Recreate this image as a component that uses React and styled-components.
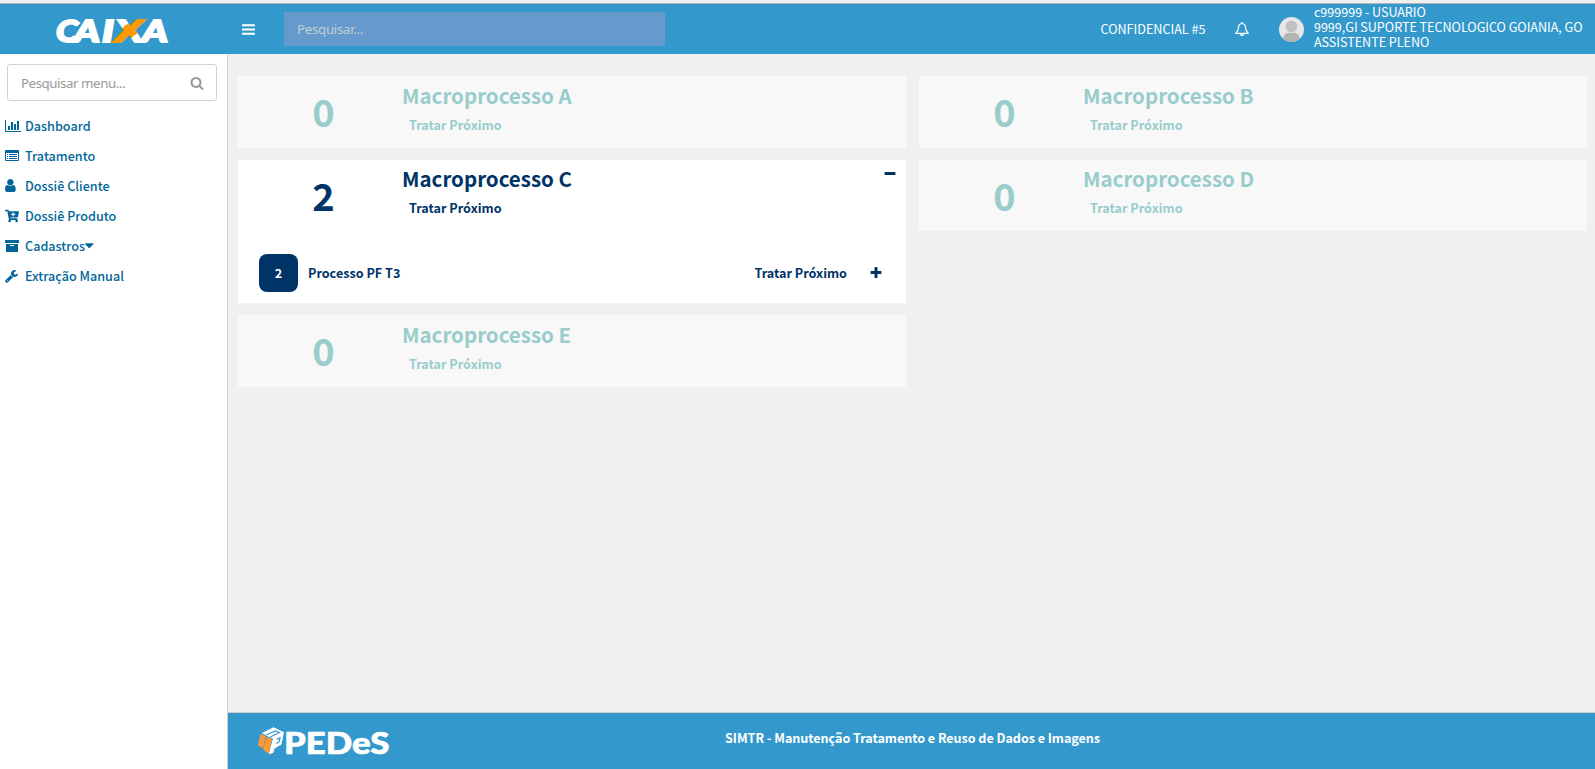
import React from "react";
import styled, { createGlobalStyle } from "styled-components";
import { FaCartPlus } from "react-icons/fa";

const sans = `"Noto Sans CJK SC", "Noto Sans", sans-serif`;

const GlobalStyle = createGlobalStyle`
  * { box-sizing: border-box; }
  body { margin: 0; background: #f0f0f0; font-family: ${sans}; font-size: 12.6px; }
  #root { height: 100vh; }
`;

const Page = styled.div`
  height: 100vh;
  padding-top: 3px;
  display: flex;
  flex-direction: column;
  overflow: hidden;
`;

const Header = styled.header`
  height: 51px;
  flex: none;
  display: flex;
  align-items: center;
  background: #3399cc;
  border-top: 1px solid #b3b3b3;
  color: #fff;
`;

const Brand = styled.div`
  width: 241px;
  padding: 3px 0 0 55px;
  flex: none;
`;

const BrandWord = styled.svg`
  display: block;
  width: 116px;
  height: 28px;
  overflow: visible;
  font: italic 900 31px Lato, sans-serif;
  fill: #fff;
  stroke: #fff;
  stroke-width: 1.8px;
  stroke-linejoin: miter;
`;

const IconButton = styled.button`
  display: flex;
  padding: 0;
  border: 0;
  background: none;
  color: inherit;
`;

const HeaderSearch = styled.input`
  width: 381px;
  height: 34px;
  margin-left: 28px;
  padding: 0 13px;
  border: 0;
  background: #6699cc;
  font: 13.3px "Noto Sans", sans-serif;
  letter-spacing: -0.3px;
  &::placeholder { color: #c0d0d0; opacity: 1; }
`;

const Account = styled.div`
  margin-left: auto;
  padding-right: 12.5px;
  display: flex;
  align-items: center;
`;

const Confidential = styled.span`
  margin: -1px 30px 0 0;
`;

const Avatar = styled.svg`
  width: 25px;
  height: 25px;
  margin: 0 9.5px 0 30px;
`;

const UserInfo = styled.div`
  height: 51px;
  line-height: 15px;
  letter-spacing: -0.03px;
  white-space: nowrap;
`;

const Body = styled.div`
  flex: 1;
  min-height: 0;
  display: flex;
`;

const Sidebar = styled.aside`
  width: 228px;
  flex: none;
  padding: 10px 10px 0 7px;
  background: #fff;
  border-right: 1px solid #d2d2d2;
`;

const MenuSearch = styled.div`
  height: 37px;
  display: flex;
  align-items: center;
  padding: 0 12px 0 13px;
  border: 1px solid #d2d2d2;
  border-radius: 3px;
  color: #999;
`;

const MenuInput = styled.input`
  flex: 1;
  min-width: 0;
  padding: 0;
  border: 0;
  outline: 0;
  font: 13.3px "Noto Sans", sans-serif;
  letter-spacing: -0.44px;
  &::placeholder { color: #999; opacity: 1; }
`;

const Menu = styled.nav`
  margin: 9px 0 0 -2px;
`;

const MenuItem = styled.a`
  height: 30px;
  display: flex;
  align-items: center;
  color: #006699;
  font-weight: 500;
`;

const MenuIcon = styled.span`
  width: 20px;
  padding-top: 1px;
  display: flex;
  font-size: 14px;
`;

const Content = styled.div`
  flex: 1;
  min-width: 0;
  display: flex;
  flex-direction: column;
`;

const Board = styled.main`
  flex: 1;
  padding: 22px 8px 0 10px;
  display: grid;
  grid-template-columns: 1fr 1fr;
  gap: 13px;
`;

const Column = styled.div`
  display: flex;
  flex-direction: column;
  gap: 12px;
`;

const Card = styled.section`
  background: ${(p) => (p.$active ? "#fff" : "#f8f8f8")};
  color: ${(p) => (p.$active ? "#003366" : "#99cccc")};
  font-weight: 700;
`;

const CardHead = styled.div`
  height: 71.6px;
  display: flex;
`;

const Count = styled.div`
  width: 164px;
  padding-left: 7px;
  display: flex;
  justify-content: center;
  font-size: 38px;
  line-height: 69.2px;
`;

const CardTitles = styled.div`
  flex: 1;
`;

const Title = styled.h2`
  margin: 3.7px 0 0;
  font-size: 20.5px;
  line-height: 30px;
`;

const Next = styled.div`
  margin-top: 2.1px;
  padding-left: 7px;
  line-height: 26px;
`;

const Toggle = styled.div`
  padding: 6px 9px 0 0;
`;

const Process = styled.div`
  height: 71.8px;
  padding: 22px 23px 11px 21px;
  display: flex;
  align-items: center;
`;

const Badge = styled.div`
  width: 39px;
  height: 38px;
  margin-right: 10px;
  border-radius: 8px;
  background: #003366;
  color: #fff;
  text-align: center;
  line-height: 38px;
`;

const ProcessName = styled.span`
  margin-top: -1px;
`;

const ProcessNext = styled.span`
  margin: -1px 22px 0 auto;
`;

const Footer = styled.footer`
  height: 57px;
  flex: none;
  border-top: 1px solid #ccc;
  background: #3399cc;
  color: #fff;
  display: flex;
`;

const FooterBrand = styled.div`
  width: 497px;
  padding: 14px 0 0 30px;
  display: flex;
`;

const Cube = styled.svg`
  width: 26px;
  height: 28px;
`;

const PedesWord = styled.span`
  font: 900 31px/31px Lato, sans-serif;
  transform-origin: left center;
  transform: scaleX(1.12);
  -webkit-text-stroke: 0.7px currentColor;
`;

const FooterText = styled.div`
  font-weight: 700;
  line-height: 50px;
  letter-spacing: -0.05px;
  white-space: nowrap;
`;

const glyphs = {
  bars: "M1664 1344v128q0 26-19 45t-45 19h-1408q-26 0-45-19t-19-45v-128q0-26 19-45t45-19h1408q26 0 45 19t19 45zm0-512v128q0 26-19 45t-45 19h-1408q-26 0-45-19t-19-45v-128q0-26 19-45t45-19h1408q26 0 45 19t19 45zm0-512v128q0 26-19 45t-45 19h-1408q-26 0-45-19t-19-45v-128q0-26 19-45t45-19h1408q26 0 45 19t19 45z",
  search: "M1216 832q0-185-131.5-316.5t-316.5-131.5-316.5 131.5-131.5 316.5 131.5 316.5 316.5 131.5 316.5-131.5 131.5-316.5zm512 832q0 52-38 90t-90 38q-54 0-90-38l-343-342q-179 124-399 124-143 0-273.5-55.5t-225-150-150-225-55.5-273.5 55.5-273.5 150-225 225-150 273.5-55.5 273.5 55.5 225 150 150 225 55.5 273.5q0 220-124 399l343 343q37 37 37 90z",
  plus: "M1600 736v192q0 40-28 68t-68 28h-416v416q0 40-28 68t-68 28h-192q-40 0-68-28t-28-68v-416h-416q-40 0-68-28t-28-68v-192q0-40 28-68t68-28h416v-416q0-40 28-68t68-28h192q40 0 68 28t28 68v416h416q40 0 68 28t28 68z",
  minus: "M1600 736v192q0 40-28 68t-68 28h-1216q-40 0-68-28t-28-68v-192q0-40 28-68t68-28h1216q40 0 68 28t28 68z",
  caret: "M1408 704q0 26-19 45l-448 448q-19 19-45 19t-45-19l-448-448q-19-19-19-45t19-45 45-19h896q26 0 45 19t19 45z",
  wrench: "M448 1472q0-26-19-45t-45-19-45 19-19 45 19 45 45 19 45-19 19-45zm644-420l-682 682q-37 37-90 37-52 0-91-37l-106-108q-38-36-38-90 0-53 38-91l681-681q39 98 114.5 173.5t173.5 114.5zm634-435q0 39-23 106-47 134-164.5 217.5t-258.5 83.5q-185 0-316.5-131.5t-131.5-316.5 131.5-316.5 316.5-131.5q58 0 121.5 16.5t107.5 46.5q16 11 16 28t-16 28l-293 169v224l193 107q5-3 79-48.5t135.5-81 70.5-35.5q15 0 23.500 10t8.500 25z",
  user: "M1536 1399q0 109-62.5 187t-150.5 78h-854q-88 0-150.5-78t-62.5-187q0-85 8.5-160.5t31.5-152 58.5-131 94-89 134.5-34.500q131 128 313 128t313-128q76 0 134.5 34.5t94 89 58.5 131 31.5 152 8.5 160.5zm-256-887q0 159-112.500 271.500t-271.500 112.500-271.500-112.500-112.500-271.500 112.500-271.500 271.500-112.500 271.500 112.500 112.500 271.500z",
};

const Glyph = ({ name, size = 14, x = 0, width = 1792 }) => (
  <svg width={(size * width) / 1792} height={size} viewBox={`${x} 0 ${width} 1792`} fill="currentColor">
    <path d={glyphs[name]} />
  </svg>
);

const ChartIcon = () => (
  <svg width="16" height="12" viewBox="0 0 16 12" fill="currentColor">
    <path d="M0 0h1v11h15v1H0zM3 6h2v4H3zM6 2h2v8H6zM9 4h2v6H9zM12 1h2v9h-2z" />
  </svg>
);

const ListIcon = () => (
  <svg width="14" height="12" viewBox="0 0 14 12" fill="currentColor">
    <path fillRule="evenodd" d="M1 0h12a1 1 0 0 1 1 1v9a1 1 0 0 1-1 1H1a1 1 0 0 1-1-1V1a1 1 0 0 1 1-1zM1 3v7h12V3z" />
    <path d="M2 4h1v1H2zM4 4h8v1H4zM2 6h1v1H2zM4 6h8v1H4zM2 8h1v1H2zM4 8h8v1H4z" />
  </svg>
);

const ArchiveIcon = () => (
  <svg width="14" height="12" viewBox="0 0 14 12" fill="currentColor">
    <path fillRule="evenodd" d="M0 0h14v3H0zM1 4h12v8H1zM5 5h4v1H5z" />
  </svg>
);

const BellIcon = () => (
  <svg width="14" height="14" viewBox="0 0 14 14" fill="none" stroke="currentColor" strokeLinejoin="round">
    <path strokeWidth="1.250" d="M7 1.500C4.700 1.800 3.600 3.200 3.500 5.200 3.400 8 2.500 9.700 .8 11.300h12.400C11.500 9.700 10.600 8 10.500 5.200 10.400 3.200 9.300 1.800 7 1.500z" />
    <path strokeWidth="1.400" d="M7 0v1.500M5.500 12c.2 1 .8 1.400 1.500 1.400s1.300-.4 1.500-1.400" />
  </svg>
);

const UserIcon = () => <Glyph name="user" x={256} size={15} width={1408} />;
const WrenchIcon = () => <Glyph name="wrench" x={64} />;

const brandLetters = [
  ["C", 1, 22],
  ["A", 19, 26],
  ["I", 47, 12],
  ["X", 60, 28, "url(#cross)"],
  ["A", 87, 26],
];

const BrandLogo = () => (
  <BrandWord viewBox="0 0 116 28">
    <linearGradient id="cross" gradientUnits="userSpaceOnUse" x1="66.900" y1="2" x2="81.100" y2="20.600">
      <stop offset="0.31" stopColor="#fff" />
      <stop offset="0.31" stopColor="#ff9900" />
      <stop offset="0.88" stopColor="#ff9900" />
      <stop offset="0.88" stopColor="#fff" />
    </linearGradient>
    {brandLetters.map(([letter, x, length, paint]) => (
      <text key={x} x={x} y="25" textLength={length} lengthAdjust="spacingAndGlyphs" fill={paint} stroke={paint}>
        {letter}
      </text>
    ))}
  </BrandWord>
);

const menu = [
  ["Dashboard", ChartIcon],
  ["Tratamento", ListIcon],
  ["Dossiê Cliente", UserIcon],
  ["Dossiê Produto", FaCartPlus],
  ["Cadastros", ArchiveIcon, true],
  ["Extração Manual", WrenchIcon],
];

function MacroCard({ name, count, children }) {
  return (
    <Card $active={count > 0}>
      <CardHead>
        <Count>{count}</Count>
        <CardTitles>
          <Title>{name}</Title>
          <Next>Tratar Próximo</Next>
        </CardTitles>
        {count > 0 && <Toggle><Glyph name="minus" /></Toggle>}
      </CardHead>
      {children}
    </Card>
  );
}

export default function App() {
  return (
    <Page>
      <GlobalStyle />
      <Header>
        <Brand><BrandLogo /></Brand>
        <IconButton><Glyph name="bars" size={15} /></IconButton>
        <HeaderSearch placeholder="Pesquisar..." />
        <Account>
          <Confidential>CONFIDENCIAL #5</Confidential>
          <IconButton><BellIcon /></IconButton>
          <Avatar viewBox="0 0 25 25">
            <clipPath id="face"><circle cx="12.500" cy="12.500" r="12.500" /></clipPath>
            <g clipPath="url(#face)">
              <rect width="25" height="25" fill="#e6e6e6" />
              <ellipse cx="12.500" cy="22" rx="8.500" ry="7" fill="#b3b3b3" />
              <circle cx="12.500" cy="9.500" r="6.300" fill="#c0c0c0" stroke="#e6e6e6" />
            </g>
          </Avatar>
          <UserInfo>
            c999999 - USUARIO<br />9999,GI SUPORTE TECNOLOGICO GOIANIA, GO<br />ASSISTENTE PLENO
          </UserInfo>
        </Account>
      </Header>
      <Body>
        <Sidebar>
          <MenuSearch><MenuInput placeholder="Pesquisar menu..." /><Glyph name="search" /></MenuSearch>
          <Menu>
            {menu.map(([label, Icon, caret]) => (
              <MenuItem key={label}>
                <MenuIcon><Icon /></MenuIcon>{label}
                {caret && <Glyph name="caret" x={384} width={1024} size={15} />}
              </MenuItem>
            ))}
          </Menu>
        </Sidebar>
        <Content>
          <Board>
            <Column>
              <MacroCard name="Macroprocesso A" count={0} />
              <MacroCard name="Macroprocesso C" count={2}>
                <Process>
                  <Badge>2</Badge>
                  <ProcessName>Processo PF T3</ProcessName>
                  <ProcessNext>Tratar Próximo</ProcessNext>
                  <Glyph name="plus" />
                </Process>
              </MacroCard>
              <MacroCard name="Macroprocesso E" count={0} />
            </Column>
            <Column>
              <MacroCard name="Macroprocesso B" count={0} />
              <MacroCard name="Macroprocesso D" count={0} />
            </Column>
          </Board>
          <Footer>
            <FooterBrand>
              <Cube viewBox="0 0 80 84">
                <path fill="#ff9933" d="M8 20l16 7-8 38-16-10zM28 30l16 6-11 45-17-11 6-26z" />
                <path fill="#fff" d="M12 17L48 0l32 15-8 38-21 12-4 13-14 5 13-49-15-6z" />
                <path fill="none" stroke="#3399cc" strokeWidth="3.500" d="M26 23l28-12 12 5-28 14M58 37l10-5-3 13-9 5" />
              </Cube>
              <PedesWord>PEDeS</PedesWord>
            </FooterBrand>
            <FooterText>SIMTR - Manutenção Tratamento e Reuso de Dados e Imagens</FooterText>
          </Footer>
        </Content>
      </Body>
    </Page>
  );
}
